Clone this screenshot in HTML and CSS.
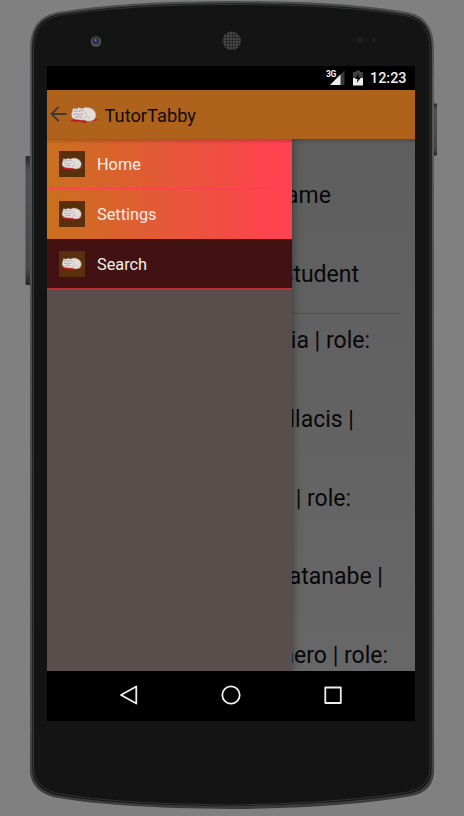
FILE: index.html
```html
<!DOCTYPE html>
<html lang="en">
<head>
<meta charset="utf-8">
<title>TutorTabby</title>
<link rel="stylesheet" href="styles.css">
</head>
<body>
<svg class="defs" width="0" height="0" aria-hidden="true">
  <symbol id="tabby" viewBox="0 0 30 18">
    <path d="M1 14.200L8 12.500l14 .5 8 .3-4.500 1.700-7 .3-2.500 2-5-1.700-4 .5z" fill="#c5161c"/>
    <path d="M3 6L4 2l3 .8L10 1.500 13 2.500Q17 .3 21 1.800 27 4 27 9.500 26.700 14 22.500 15 18 16 15.500 14.300L11 14Q5 14 2.800 11.500 1.500 8 3 6z" fill="#e2dcda" stroke="#9b7d6c" stroke-width=".5"/>
    <path d="M5 5.500l3-.8 2 .7 3-1.400 2 1M4.500 8.500l3-.5 3 .8 4-1M6 11.500l3-.8 4 .5" fill="none" stroke="#8c8280" stroke-width=".8" stroke-dasharray="2 .6"/>
    <path d="M15.500 5q2.500 1.500 1.500 4M18 10.500q-3 .5-2.500 2.500M18 10.500l3 1.500" fill="none" stroke="#aaa09d" stroke-width=".6"/>
  </symbol>
</svg>
<div class="stage">
  <svg class="device" viewBox="0 0 464 816" aria-hidden="true">
    <defs>
      <linearGradient id="rim" x1="0" y1="0" x2="0" y2="1">
        <stop offset="0" stop-color="#4b4c4c"/><stop offset=".1" stop-color="#58595c"/><stop offset=".9" stop-color="#444546"/><stop offset="1" stop-color="#393939"/>
      </linearGradient>
      <pattern id="mesh" width="3" height="3" patternUnits="userSpaceOnUse">
        <rect width="3" height="3" fill="#484848"/><circle cx="1.500" cy="1.500" r="1" fill="#171717"/>
      </pattern>
      <linearGradient id="button" x1="0" y1="0" x2="0" y2="1">
        <stop offset="0" stop-color="#292929"/><stop offset=".12" stop-color="#505050"/><stop offset=".88" stop-color="#474747"/><stop offset="1" stop-color="#252525"/>
      </linearGradient>
    </defs>
    <rect x="25.500" y="156" width="6" height="129" rx="1" fill="url(#button)"/>
    <rect x="432" y="103.500" width="5" height="52" rx="1" fill="url(#button)"/>
    <path d="M30 48Q30 17 58 12Q125 1 232 1Q345 1 409 12.500Q434 18 434 49V770Q434 792 411 796Q345 808 232 809Q112 808 53 797Q30 790 30 770Z" fill="url(#rim)"/>
    <path d="M31.800 48Q32 19 58 14Q125 3 232 3Q345 3 408 14.500Q432 20 432 49V769Q432 789 410 794Q345 805 232 806.500Q112 806 54 795Q32 788 32 769Z" fill="#141414" stroke="#555" stroke-width=".5"/>
    <path d="M33.500 48Q34 21 59 15.500Q125 4.500 232 4.500Q345 4.500 407 16Q430 22 430 49V768Q430 787 409 792Q345 803 232 805Q112 804 55 793Q33.500 786 33.500 768Z" fill="#141414" stroke="#333435"/>
    <circle cx="96" cy="41.500" r="5.200" fill="#56575b"/><circle cx="96" cy="41" r="3.800" fill="#303036"/><circle cx="96" cy="41" r="2" fill="#30308b"/><circle cx="95.500" cy="40" r=".8" fill="#9292c2"/>
    <circle cx="231.700" cy="40.800" r="9.300" fill="url(#mesh)"/>
    <circle cx="360" cy="40" r="3.500" fill="#211d1d"/><circle cx="373.500" cy="40" r="2" fill="#242121"/>
  </svg>
  <main class="screen">
    <header class="status">
      <svg class="signal" viewBox="0 0 20 18" aria-hidden="true">
        <path d="M4 16L18.500 1.500V16z" fill="#393939"/><path d="M4 16L14.500 5.500V16z" fill="#eee"/>
        <text x="0" y="7.700" class="network">3G</text>
      </svg>
      <svg class="battery" viewBox="0 0 10 16" aria-hidden="true">
        <path d="M0 2h3V.5h4V2h3v6H0z" fill="#404040"/><path d="M0 8h10v7.500H0z" fill="#eee"/><path d="M5.800 3.500L2 9h2.600L3.700 13 8 7.500H5.300z" fill="#000"/>
      </svg>
      <span class="clock">12:23</span>
    </header>
    <div class="appbar">
      <svg class="back" viewBox="0 0 17 16" aria-hidden="true"><path d="M16.500 8H1.500M8.700 .8L1.500 8l7.200 7.200" fill="none" stroke="#403b36" stroke-width="1.900"/></svg>
      <svg class="logo"><use href="#tabby"/></svg>
      <h1>TutorTabby</h1>
    </div>
    <section class="content">
      <div class="list">
        <p class="row name">ame</p>
        <p class="row student">Student</p>
        <hr>
        <p class="row ia">ia | role:</p>
        <p class="row llacis">llacis |</p>
        <p class="row role">| role:</p>
        <p class="row atanabe">atanabe |</p>
        <p class="row nero">nero | role:</p>
      </div>
      <nav class="drawer">
        <a class="item"><span class="thumb"><svg><use href="#tabby"/></svg></span><span class="label">Home</span></a>
        <a class="item"><span class="thumb"><svg><use href="#tabby"/></svg></span><span>Settings</span></a>
        <a class="item active"><span class="thumb"><svg><use href="#tabby"/></svg></span><span class="label">Search</span></a>
      </nav>
    </section>
    <footer class="navbar">
      <svg viewBox="0 0 24 24"><path d="M4 12L19.300 3.500v17z"/></svg>
      <svg viewBox="0 0 24 24"><circle cx="12" cy="12" r="8.700"/></svg>
      <svg viewBox="0 0 24 24"><path d="M4.300 4.500h15.500V20H4.300z"/></svg>
    </footer>
  </main>
</div>
</body>
</html>
```

FILE: styles.css
```css
* { box-sizing: border-box; }
body { margin: 0; background: #808080; font-family: Roboto, sans-serif; overflow: hidden; }
.defs { position: absolute; }
.stage { position: relative; width: 464px; height: 816px; padding: 66px 49px 95px 47px; }
.device { position: absolute; inset: 0; width: 464px; height: 816px; }
.screen { position: relative; display: flex; flex-direction: column; height: 655px; background: #000; overflow: hidden; }
.status { display: flex; flex: none; height: 24px; align-items: center; justify-content: flex-end; padding-right: 8.500px; color: #eee; }
.signal { width: 20px; height: 18px; margin-right: 7px; }
.network { font: bold 8.500px Roboto, sans-serif; fill: #eee; letter-spacing: -.5px; }
.battery { width: 10px; height: 16px; margin-right: 7px; }
.clock { padding-top: 2px; font-size: 14.400px; font-weight: 500; line-height: 24px; }
.appbar { display: flex; flex: none; align-items: center; height: 49px; padding-left: 3px; background: #ae621b; }
.back { width: 17px; height: 16px; margin-top: -1px; }
.logo { width: 30px; height: 18px; margin-left: 2px; }
h1 { margin: 2px 0 0 5.500px; font-size: 18.300px; font-weight: 400; line-height: 24px; color: #120b05; }
.content { position: relative; flex: none; height: 532px; overflow: hidden; background: linear-gradient(#5e5e5e, #676767); }
.content::after { content: ""; position: absolute; inset: 0 0 auto; height: 5px; background: linear-gradient(#0003, transparent); }
.list { display: flex; flex-direction: column; padding-top: 18px; }
.row { flex: none; height: 78.700px; margin: 0; line-height: 78.700px; font-size: 23px; color: #080808; text-align: right; white-space: nowrap; }
hr { flex: none; height: 1px; margin: -1px 15px -12px 15px; border: 0; background: #505050; }
.name { padding-right: 84px; }
.student { padding-right: 56px; }
.ia { padding-right: 45px; }
.llacis { padding-right: 61px; }
.role { padding-right: 64px; }
.atanabe { padding-right: 32px; }
.nero { padding-right: 27px; }
.drawer { position: absolute; inset: 0 auto 0 0; width: 245px; background: #594e4c; box-shadow: 0 0 9px #0007; }
.item { display: flex; align-items: center; height: 50px; padding: 0 12px; gap: 12px; border-bottom: 1px solid #ff4051; background: linear-gradient(90deg, #ca701e, #ff424f 95%); color: #f3eeee; font-size: 16.300px; }
.item + .item { border-bottom: 0; }
.item.active { height: 51px; border-bottom: 2px solid #bd3036; background: #421212; }
.label { padding-top: 2px; }
.thumb { display: flex; align-items: center; justify-content: center; width: 26px; height: 26px; background: #58300d; }
.thumb svg { width: 24px; height: 14px; }
.navbar { display: flex; flex: 1; align-items: center; justify-content: center; gap: 78px; padding-bottom: 2px; }
.navbar svg { width: 24px; height: 24px; fill: none; stroke: #eee; stroke-width: 1.800; stroke-linejoin: round; }
```
